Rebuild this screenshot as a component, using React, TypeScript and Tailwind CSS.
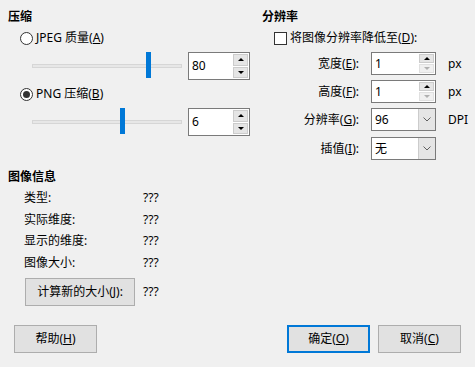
import type { ReactNode } from "react";

const FONT = "font-['Noto_Sans','Noto_Sans_CJK_SC',sans-serif]";

function Radio({ checked, children }: { checked?: boolean; children: ReactNode }) {
  return (
    <div className="mt-[5px] flex h-4 items-center gap-[3px] pl-[12px]">
      <span className="flex h-[13px] w-[13px] items-center justify-center rounded-full border border-[#333333] bg-white">
        {checked && <span className="h-[7px] w-[7px] rounded-full bg-[#333333]" />}
      </span>
      <span>{children}</span>
    </div>
  );
}

function SpinButtons({ lowDisabled }: { lowDisabled?: boolean }) {
  return (
    <div className="flex w-[16px] flex-col gap-[1px] py-[1px] pr-[1px]">
      <div className="flex flex-1 items-center justify-center border border-[#cccccc] bg-[#e5e5e5]">
        <span className="h-0 w-0 border-x-[3px] border-b-[3px] border-x-transparent border-b-black" />
      </div>
      <div
        className={
          lowDisabled
            ? "flex flex-1 items-center justify-center border border-[#e0e0e0] bg-[#f0f0f0]"
            : "flex flex-1 items-center justify-center border border-[#cccccc] bg-[#e5e5e5]"
        }
      >
        <span
          className={
            lowDisabled
              ? "h-0 w-0 border-x-[3px] border-t-[3px] border-x-transparent border-t-[#b0b0b0]"
              : "h-0 w-0 border-x-[3px] border-t-[3px] border-x-transparent border-t-black"
          }
        />
      </div>
    </div>
  );
}

function SliderRow({ thumb, value }: { thumb: number; value: string }) {
  return (
    <div className="mt-[6px] flex h-[28px] items-center">
      <div className="relative ml-[24px] flex h-[28px] w-[150px] items-center">
        <div className="h-[4px] w-full border border-[#d6d6d6] bg-[#e7e7e7]" />
        <div className="absolute top-0 h-[26px] w-[5px] bg-[#0078d7]" style={{ left: thumb }} />
      </div>
      <div className="ml-[6px] flex h-[28px] w-[62px] border border-[#7a7a7a] bg-white">
        <span className="flex flex-1 items-center pl-[3px]">{value}</span>
        <SpinButtons />
      </div>
    </div>
  );
}

function Chevron() {
  return (
    <svg width="8" height="5" viewBox="0 0 8 5" fill="none">
      <path d="M0.5 0.5 L4 4 L7.5 0.5" stroke="#606060" strokeWidth="1" />
    </svg>
  );
}

function FieldRow({
  label,
  unit,
  className,
  children,
}: {
  label: ReactNode;
  unit?: string;
  className: string;
  children: ReactNode;
}) {
  return (
    <div className={`flex h-[23px] items-center ${className}`}>
      <span className="w-[97px] text-right">{label}</span>
      <div className="ml-[12px] flex h-[23px] w-[65px] border border-[#7a7a7a] bg-white">{children}</div>
      {unit && <span className="ml-[12px]">{unit}</span>}
    </div>
  );
}

function SpinField({ value }: { value: string }) {
  return (
    <>
      <span className="flex flex-1 items-center pl-[3px]">{value}</span>
      <SpinButtons lowDisabled />
    </>
  );
}

function ComboField({ value }: { value: string }) {
  return (
    <>
      <span className="flex flex-1 items-center pl-[3px]">{value}</span>
      <div className="flex w-[17px] items-center justify-center border-l border-[#cccccc] bg-[#e5e5e5]">
        <Chevron />
      </div>
    </>
  );
}

function InfoRow({ label }: { label: string }) {
  return (
    <div className="flex h-4 items-center">
      <span className="w-[119px]">{label}</span>
      <span>???</span>
    </div>
  );
}

function Button({ children, primary, className = "" }: { children: ReactNode; primary?: boolean; className?: string }) {
  return (
    <button
      type="button"
      className={
        primary
          ? `flex h-[28px] items-center justify-center border-2 border-[#0078d7] bg-[#e1e1e1] ${className}`
          : `flex h-[28px] items-center justify-center border border-[#adadad] bg-[#e1e1e1] ${className}`
      }
    >
      {children}
    </button>
  );
}

export default function App() {
  return (
    <div className={`flex h-[367px] w-[475px] flex-col bg-[#f0f0f0] text-[12px] leading-[16px] text-black ${FONT}`}>
      <div className="flex pt-[9px]">
        {/* 压缩 */}
        <div className="flex w-[262px] flex-col pl-[8px]">
          <div className="h-4 font-bold">压缩</div>
          <Radio>
            JPEG 质量(<u>A</u>)
          </Radio>
          <SliderRow thumb={114} value="80" />
          <div className="mt-[1px]">
            <Radio checked>
              PNG 压缩(<u>B</u>)
            </Radio>
          </div>
          <SliderRow thumb={88} value="6" />
        </div>

        {/* 分辨率 */}
        <div className="flex flex-col">
          <div className="h-4 font-bold">分辨率</div>
          <div className="mt-[5px] flex h-4 items-center gap-[3px] pl-[12px]">
            <span className="h-[13px] w-[13px] border border-[#333333] bg-white" />
            <span>
              将图像分辨率降低至(<u>D</u>):
            </span>
          </div>
          <FieldRow className="mt-[6px]" label={<>宽度(<u>E</u>):</>} unit="px">
            <SpinField value="1" />
          </FieldRow>
          <FieldRow className="mt-[5px]" label={<>高度(<u>F</u>):</>} unit="px">
            <SpinField value="1" />
          </FieldRow>
          <FieldRow className="mt-[5px]" label={<>分辨率(<u>G</u>):</>} unit="DPI">
            <ComboField value="96" />
          </FieldRow>
          <FieldRow className="mt-[6px]" label={<>插值(<u>I</u>):</>}>
            <ComboField value="无" />
          </FieldRow>
        </div>
      </div>

      {/* 图像信息 */}
      <div className="mt-[9px] flex flex-col pl-[8px]">
        <div className="h-4 font-bold">图像信息</div>
        <div className="mt-[5px] flex flex-col gap-[5.5px] pl-[16px]">
          <InfoRow label="类型:" />
          <InfoRow label="实际维度:" />
          <InfoRow label="显示的维度:" />
          <InfoRow label="图像大小:" />
        </div>
        <div className="mt-[7.5px] flex items-center pl-[17px]">
          <Button className="w-[110px]">
            计算新的大小(<u>J</u>):
          </Button>
          <span className="ml-[8px]">???</span>
        </div>
      </div>

      <div className="mt-[19px] flex justify-between px-[14px]">
        <Button className="w-[83px]">
          帮助(<u>H</u>)
        </Button>
        <div className="flex gap-[8px]">
          <Button primary className="w-[83px]">
            确定(<u>O</u>)
          </Button>
          <Button className="w-[83px]">
            取消(<u>C</u>)
          </Button>
        </div>
      </div>
    </div>
  );
}
